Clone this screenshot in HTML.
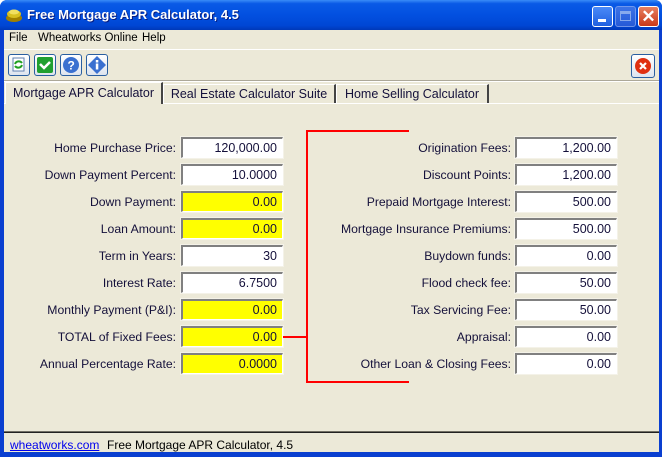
<!DOCTYPE html>
<html><head><style>
*{margin:0;padding:0;box-sizing:border-box}
body{width:664px;height:457px;background:#fff;font-family:"Liberation Sans",sans-serif;font-size:12px;color:#000;position:relative;overflow:hidden}
.win{position:absolute;left:0;top:0;width:662px;height:457px;background:#0a3fd0;border-radius:7px 7px 0 0}
.title{position:absolute;left:0;top:0;width:662px;height:30px;background:linear-gradient(#3a8cf8 0,#0a5ae6 12%,#0250e0 50%,#0046d4 85%,#0038b8 100%);border-radius:7px 7px 0 0}
.title span{position:absolute;left:27px;top:7px;color:#fff;font-weight:bold;font-size:13px;text-shadow:1px 1px #0a1e80}
.client{position:absolute;left:4px;top:30px;width:655px;height:422px;background:#ece9d8}
.tb{position:absolute;width:22px;height:22px;border:1px solid #2a5fa0;border-radius:3px;background:linear-gradient(#fff,#dde4ee)}
.tbtn{position:absolute;border:1px solid #fff;border-bottom:none;border-right:2px solid #444;background:#ece9d8;font-size:12.5px;text-align:center;color:#14103a}
.lbl{position:absolute;font-size:12.2px;text-align:right;color:#14103a;white-space:nowrap}
.f{position:absolute;width:102px;height:21px;background:#fff;border-top:2px solid #808080;border-left:2px solid #808080;border-right:1px solid #fff;border-bottom:1px solid #fff;box-shadow:0 0 0 1px #f4f2e8;text-align:right;padding:2px 5px 0 0;font-size:12.5px;color:#14103a}
.y{background:#ffff00}
.r{position:absolute;background:#f00}
</style></head><body>
<div class="win">
<div class="title">
<svg style="position:absolute;left:5px;top:7px" width="18" height="16"><ellipse cx="9" cy="11" rx="8" ry="4" fill="#a08000"/><ellipse cx="9" cy="7" rx="7" ry="4" fill="#d8c020"/><ellipse cx="9" cy="5" rx="5" ry="2.5" fill="#f0e060"/></svg>
<span>Free Mortgage APR Calculator, 4.5</span>
<div style="position:absolute;left:592px;top:6px;width:21px;height:21px;border:1px solid #fff;border-radius:3px;background:linear-gradient(#4a8af8,#2060e0)"><div style="position:absolute;left:5px;top:12px;width:8px;height:3px;background:#fff"></div></div>
<div style="position:absolute;left:615px;top:6px;width:21px;height:21px;border:1px solid #8aa8f0;border-radius:3px;background:linear-gradient(#4a7ae8,#3060d8);opacity:.8"><div style="position:absolute;left:4px;top:4px;width:11px;height:10px;border:1px solid #a8c0f0;border-top:3px solid #a8c0f0"></div></div>
<div style="position:absolute;left:638px;top:6px;width:21px;height:21px;border:1px solid #fff;border-radius:3px;background:linear-gradient(#e88060,#c83818);color:#fff;font-weight:bold;font-size:17px;text-align:center;line-height:19px">✕</div>
</div>
<div class="client">
<div style="position:absolute;left:5px;top:2px;font-size:11.5px">File</div>
<div style="position:absolute;left:34px;top:2px;font-size:11.5px">Wheatworks Online</div>
<div style="position:absolute;left:138px;top:2px;font-size:11.5px">Help</div>
<div style="position:absolute;left:0;top:19px;width:655px;height:1px;background:#fff"></div>
<div style="position:absolute;left:0;top:50px;width:655px;height:1px;background:#aca899"></div>
<div style="position:absolute;left:0;top:51px;width:655px;height:1px;background:#fff"></div>
<div class="tb" style="left:4px;top:24px"><svg width="20" height="20"><rect x="4" y="3" width="11" height="13" fill="#fff" stroke="#6080b0"/><path d="M6 9a4 4 0 0 1 7-1M13 10a4 4 0 0 1-7 1" stroke="#20a020" stroke-width="2" fill="none"/></svg></div>
<div class="tb" style="left:30px;top:24px"><svg width="20" height="20"><rect x="2" y="2" width="16" height="16" rx="2" fill="#20a030"/><path d="M5 9l4 4 6-6" stroke="#fff" stroke-width="2.5" fill="none"/></svg></div>
<div class="tb" style="left:56px;top:24px"><svg width="20" height="20"><circle cx="10" cy="10" r="8" fill="#3a70d0"/><text x="6.5" y="14.5" fill="#fff" font-size="12" font-weight="bold" font-family="Liberation Sans">?</text></svg></div>
<div class="tb" style="left:82px;top:24px"><svg width="20" height="20"><path d="M10 1l9 9-9 9-9-9z" fill="#3a70d0"/><rect x="8.8" y="8.5" width="2.5" height="6" fill="#fff"/><rect x="8.8" y="5" width="2.5" height="2.5" fill="#fff"/></svg></div>
<div class="tb" style="left:627px;top:24px;width:24px;height:24px"><svg width="22" height="22"><circle cx="11" cy="11" r="8" fill="#e03010"/><path d="M8 8l6 6M14 8l-6 6" stroke="#fff" stroke-width="2.2"/></svg></div>
<div style="position:absolute;left:0;top:401px;width:655px;height:1px;background:#716f64"></div>
<div style="position:absolute;left:0;top:402px;width:655px;height:1px;background:#222"></div>
<div style="position:absolute;left:6px;top:408px;color:#0000ee;text-decoration:underline">wheatworks.com</div>
<div style="position:absolute;left:103px;top:408px">Free Mortgage APR Calculator, 4.5</div>
</div>
</div>
<div style="position:absolute;left:4px;top:103px;width:655px;height:1px;background:#fff"></div>
<div class="tbtn" style="left:163px;top:84px;width:173px;height:19px;padding-top:2px">Real Estate Calculator Suite</div>
<div class="tbtn" style="left:336px;top:84px;width:153px;height:19px;padding-top:2px">Home Selling Calculator</div>
<div class="tbtn" style="left:5px;top:82px;width:158px;height:22px;padding-top:3px;border-bottom:none">Mortgage APR Calculator</div>

<div class="lbl" style="left:0;width:176px;top:141px">Home Purchase Price:</div>
<div class="lbl" style="left:0;width:176px;top:168px">Down Payment Percent:</div>
<div class="lbl" style="left:0;width:176px;top:195px">Down Payment:</div>
<div class="lbl" style="left:0;width:176px;top:222px">Loan Amount:</div>
<div class="lbl" style="left:0;width:176px;top:249px">Term in Years:</div>
<div class="lbl" style="left:0;width:176px;top:276px">Interest Rate:</div>
<div class="lbl" style="left:0;width:176px;top:303px">Monthly Payment (P&amp;I):</div>
<div class="lbl" style="left:0;width:176px;top:330px">TOTAL of Fixed Fees:</div>
<div class="lbl" style="left:0;width:176px;top:357px">Annual Percentage Rate:</div>

<div class="f" style="left:181px;top:137px">120,000.00</div>
<div class="f" style="left:181px;top:164px">10.0000</div>
<div class="f y" style="left:181px;top:191px">0.00</div>
<div class="f y" style="left:181px;top:218px">0.00</div>
<div class="f" style="left:181px;top:245px">30</div>
<div class="f" style="left:181px;top:272px">6.7500</div>
<div class="f y" style="left:181px;top:299px">0.00</div>
<div class="f y" style="left:181px;top:326px">0.00</div>
<div class="f y" style="left:181px;top:353px">0.0000</div>

<div class="lbl" style="left:300px;width:211px;top:141px">Origination Fees:</div>
<div class="lbl" style="left:300px;width:211px;top:168px">Discount Points:</div>
<div class="lbl" style="left:300px;width:211px;top:195px">Prepaid Mortgage Interest:</div>
<div class="lbl" style="left:300px;width:211px;top:222px">Mortgage Insurance Premiums:</div>
<div class="lbl" style="left:300px;width:211px;top:249px">Buydown funds:</div>
<div class="lbl" style="left:300px;width:211px;top:276px">Flood check fee:</div>
<div class="lbl" style="left:300px;width:211px;top:303px">Tax Servicing Fee:</div>
<div class="lbl" style="left:300px;width:211px;top:330px">Appraisal:</div>
<div class="lbl" style="left:300px;width:211px;top:357px">Other Loan &amp; Closing Fees:</div>

<div class="f" style="left:515px;top:137px">1,200.00</div>
<div class="f" style="left:515px;top:164px">1,200.00</div>
<div class="f" style="left:515px;top:191px">500.00</div>
<div class="f" style="left:515px;top:218px">500.00</div>
<div class="f" style="left:515px;top:245px">0.00</div>
<div class="f" style="left:515px;top:272px">50.00</div>
<div class="f" style="left:515px;top:299px">50.00</div>
<div class="f" style="left:515px;top:326px">0.00</div>
<div class="f" style="left:515px;top:353px">0.00</div>

<div class="r" style="left:306px;top:130px;width:2px;height:253px"></div>
<div class="r" style="left:306px;top:130px;width:103px;height:2px"></div>
<div class="r" style="left:306px;top:381px;width:103px;height:2px"></div>
<div class="r" style="left:283px;top:336px;width:24px;height:2px"></div>
</body></html>
